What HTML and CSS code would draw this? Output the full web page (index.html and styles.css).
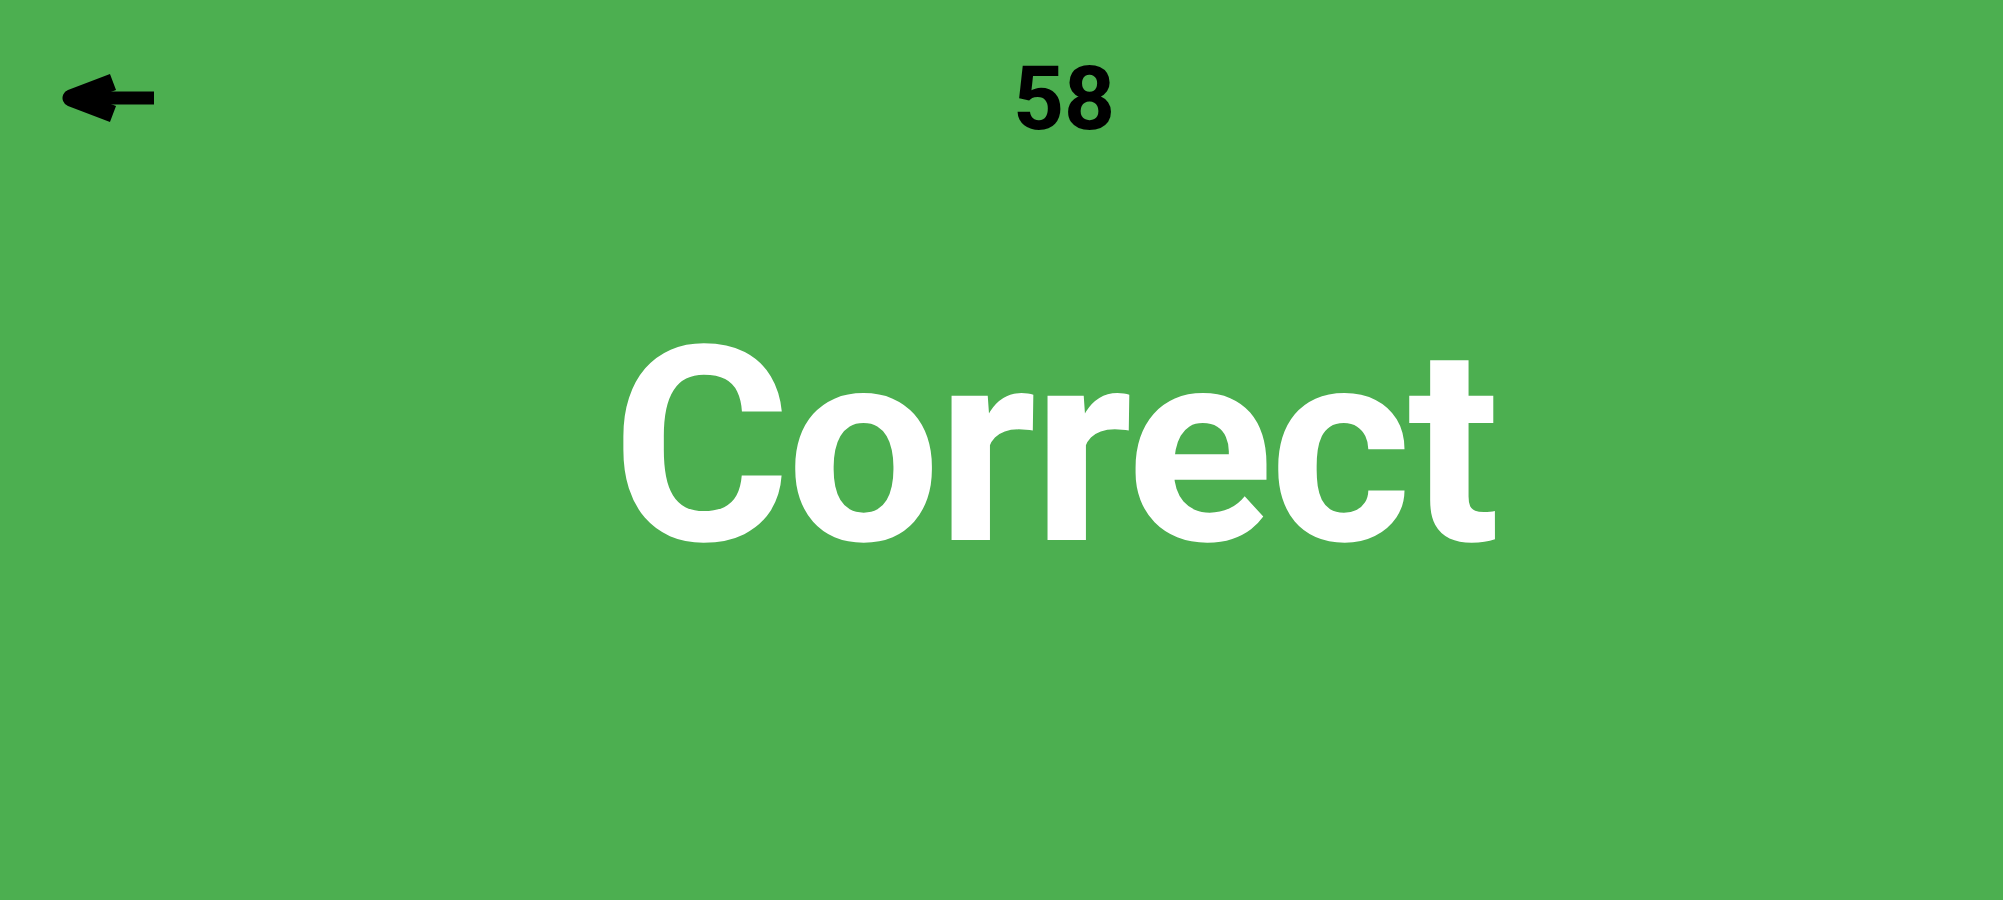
FILE: index.html
```html
<!DOCTYPE html>
<html lang="en">
<head>
<meta charset="utf-8">
<title>Correct</title>
<link rel="stylesheet" href="styles.css">
</head>
<body>
<div class="screen">
  <div class="back">
    <svg class="back-icon" viewBox="0 0 94 52" width="94" height="52" aria-label="Back">
      <path d="M52 10 L10 26 L52 42" fill="none" stroke="#000" stroke-width="17" stroke-linejoin="round" stroke-linecap="butt"/>
      <path d="M14 26 H93" fill="none" stroke="#000" stroke-width="13"/>
    </svg>
  </div>
  <div class="main">
    <div class="count">58</div>
    <div class="result">Correct</div>
  </div>
</div>
</body>
</html>
```
FILE: styles.css
```css
html, body {
  margin: 0;
  padding: 0;
  height: 100%;
}
body {
  background: #4caf50;
  font-family: Roboto, "Liberation Sans", Arial, sans-serif;
  overflow: hidden;
}
.screen {
  display: grid;
  grid-template-columns: 115px 1fr;
  height: 100%;
}
.back {
  padding: 72px 0 0 61px;
}
.back-icon {
  display: block;
}
.main {
  display: flex;
  flex-direction: column;
  align-items: center;
  padding-top: 54px;
}
.count {
  font-size: 89px;
  font-weight: 700;
  line-height: 1;
  color: #000;
  padding-left: 10px;
}
.result {
  margin-top: 168px;
  font-size: 273px;
  font-weight: 700;
  line-height: 1;
  letter-spacing: -4px;
  color: #fff;
  padding-right: 10px;
}
```
